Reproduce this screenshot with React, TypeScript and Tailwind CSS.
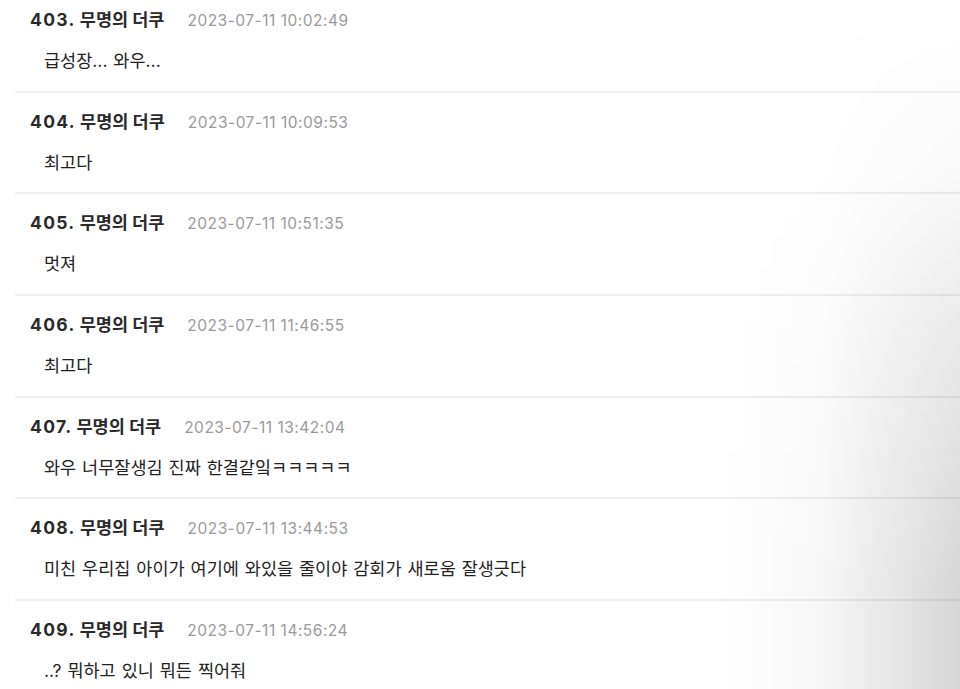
import React from 'react'

type Comment = {
  no: number
  name: string
  date: string
  body: string
}

const comments: Comment[] = [
  { no: 403, name: '무명의 더쿠', date: '2023-07-11 10:02:49', body: '급성장... 와우...' },
  { no: 404, name: '무명의 더쿠', date: '2023-07-11 10:09:53', body: '최고다' },
  { no: 405, name: '무명의 더쿠', date: '2023-07-11 10:51:35', body: '멋져' },
  { no: 406, name: '무명의 더쿠', date: '2023-07-11 11:46:55', body: '최고다' },
  { no: 407, name: '무명의 더쿠', date: '2023-07-11 13:42:04', body: '와우 너무잘생김 진짜 한결같잌ㅋㅋㅋㅋㅋ' },
  { no: 408, name: '무명의 더쿠', date: '2023-07-11 13:44:53', body: '미친 우리집 아이가 여기에 와있을 줄이야 감회가 새로움 잘생긋다' },
  { no: 409, name: '무명의 더쿠', date: '2023-07-11 14:56:24', body: '..? 뭐하고 있니 뭐든 찍어줘' },
]

function CommentRow({ c }: { c: Comment }) {
  return (
    <li className="ml-[15px] h-[101.7px] border-b-2 border-[#efefef] pt-[18px]">
      <div className="flex h-[22px] items-baseline pl-[15px] leading-[22px]">
        <span className="text-[17.5px] font-bold text-[#2a2a2a]">
          <span className="tracking-[1.3px]">{c.no}.</span> {c.name}
        </span>
        <span className="ml-[23px] text-[15.5px] tracking-[0.5px] text-[#9a9a9a]">{c.date}</span>
      </div>
      <p className="mt-[19px] h-[22px] pl-[29px] text-[17.5px] leading-[22px] text-[#222] [word-spacing:1px]">
        {c.body}
      </p>
    </li>
  )
}

export default function App() {
  return (
    <div className="relative h-[689px] w-[960px] overflow-hidden bg-white font-['Inter','Noto_Sans_CJK_KR',sans-serif]">
      <ul className="mt-[-9px]">
        {comments.map((c) => (
          <CommentRow key={c.no} c={c} />
        ))}
      </ul>

      {/* soft shadow falling on the right edge */}
      <div className="pointer-events-none absolute inset-y-0 right-0 w-[250px] bg-[linear-gradient(to_right,rgba(0,0,0,0)_0%,rgba(0,0,0,0.03)_45%,rgba(0,0,0,0.16)_100%)] [mask-image:linear-gradient(to_bottom,transparent_0%,rgba(0,0,0,0.15)_25%,rgba(0,0,0,0.55)_50%,black_85%)]" />
    </div>
  )
}
